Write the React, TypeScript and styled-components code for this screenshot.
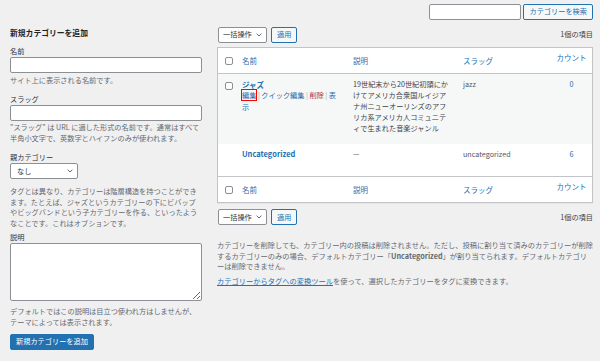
import styled, { createGlobalStyle } from "styled-components";

const GlobalStyle = createGlobalStyle`
  html, body {
    margin: 0;
    padding: 0;
  }
  body {
    background: #f0f0f1;
    color: #3c434a;
    font-family: "Noto Sans CJK JP", "Noto Sans", sans-serif;
    font-size: 7.2px;
    line-height: 10.5px;
  }
`;

const Page = styled.div`
  box-sizing: border-box;
  width: 600px;
  height: 361px;
  padding: 4px 7px 0 10px;
  overflow: hidden;
`;

const SearchRow = styled.div`
  display: flex;
  justify-content: flex-end;
  gap: 2px;
  height: 16px;
`;

const Columns = styled.div`
  display: flex;
  gap: 15px;
  margin-top: 7px;
`;

const LeftCol = styled.div`
  width: 192px;
  flex: none;
`;

const RightCol = styled.div`
  flex: 1;
  min-width: 0;
`;

const Heading = styled.h2`
  margin: 0 0 7px;
  font-size: 7.8px;
  line-height: 12px;
  font-weight: 700;
  color: #1d2327;
`;

const Field = styled.div<{ $mb: number }>`
  margin-bottom: ${(p) => p.$mb}px;
`;

const Label = styled.label`
  display: block;
  margin-bottom: 0.75px;
  color: #2c3338;
`;

const TextInput = styled.input<{ $w?: number }>`
  box-sizing: border-box;
  display: block;
  width: ${(p) => (p.$w ? `${p.$w}px` : "100%")};
  height: 16px;
  margin: 0;
  padding: 0 4px;
  border: 1px solid #8c8f94;
  border-radius: 2px;
  background: #fff;
  font: inherit;
`;

const TextArea = styled.textarea`
  box-sizing: border-box;
  display: block;
  width: 100%;
  height: 58px;
  margin: 0;
  padding: 2px 4px;
  border: 1px solid #8c8f94;
  border-radius: 2px;
  background: #fff;
  font: inherit;
  resize: vertical;
`;

const Help = styled.p<{ $mt: number }>`
  margin: ${(p) => p.$mt}px 0 0;
  color: #646970;
`;

const SelectBox = styled.div<{ $w: number; $pl: number }>`
  box-sizing: border-box;
  display: flex;
  align-items: center;
  justify-content: space-between;
  width: ${(p) => p.$w}px;
  height: 16px;
  padding: 0 4px 0 ${(p) => p.$pl}px;
  border: 1px solid #8c8f94;
  border-radius: 2px;
  background: #fff;
  color: #2c3338;
`;

const Button = styled.button<{ $primary?: boolean }>`
  box-sizing: border-box;
  height: 16px;
  margin: 0;
  padding: 0 5px;
  border: 1px solid #2271b1;
  border-radius: 2px;
  background: ${(p) => (p.$primary ? "#2271b1" : "#f6f7f7")};
  color: ${(p) => (p.$primary ? "#fff" : "#2271b1")};
  font-family: inherit;
  font-size: 7.2px;
  line-height: 1;
  white-space: nowrap;
`;

const SubmitRow = styled.div`
  margin-top: 6.5px;
`;

const TableNav = styled.div<{ $mt: number; $mb: number }>`
  display: flex;
  align-items: center;
  justify-content: space-between;
  height: 15px;
  margin: ${(p) => p.$mt}px 0 ${(p) => p.$mb}px;
`;

const BulkActions = styled.div`
  display: flex;
  align-items: center;
  gap: 4px;
  padding-left: 1px;
`;

const ItemCount = styled.span`
  color: #3c434a;
`;

const Table = styled.table`
  width: 100%;
  table-layout: fixed;
  border-collapse: separate;
  border-spacing: 0;
  background: #fff;
  border: 1px solid #c3c4c7;
  box-shadow: 0 1px 1px rgba(0, 0, 0, 0.04);
`;

const Th = styled.th<{ $w?: number; $center?: boolean; $raise?: boolean; $foot?: boolean; $pl?: number }>`
  ${(p) => (p.$w ? `width: ${p.$w}px;` : "")}
  box-sizing: border-box;
  padding: ${(p) => (p.$raise ? "3.5px 3px 10.5px" : "7px 3px")};
  padding-left: ${(p) => p.$pl ?? 3}px;
  text-align: ${(p) => (p.$center ? "center" : "left")};
  font-weight: 400;
  font-size: 7.5px;
  line-height: 11px;
  color: #2271b1;
  vertical-align: middle;
  ${(p) => (p.$foot ? "border-top: 1px solid #c3c4c7;" : "border-bottom: 1px solid #c3c4c7;")}
`;

const Row = styled.tr<{ $alt?: boolean }>`
  background: ${(p) => (p.$alt ? "#f6f7f7" : "#fff")};
`;

const Td = styled.td<{ $center?: boolean; $pb?: number; $pl?: number; $pr?: number; $pt?: number }>`
  padding: ${(p) => p.$pt ?? 5}px ${(p) => p.$pr ?? 3}px ${(p) => p.$pb ?? 5}px ${(p) => p.$pl ?? 3}px;
  vertical-align: top;
  text-align: ${(p) => (p.$center ? "center" : "left")};
  line-height: 11px;
  color: #50575e;
`;

const DescCell = styled(Td)`
  color: #3c434a;
`;

const Check = styled.input.attrs({ type: "checkbox" })`
  appearance: none;
  display: block;
  box-sizing: border-box;
  width: 8px;
  height: 8px;
  margin: 0;
  border: 1px solid #8c8f94;
  border-radius: 2px;
  background: #fff;
`;

const RowTitle = styled.a`
  display: block;
  font-size: 7.5px;
  line-height: 11.5px;
  font-weight: 700;
  color: #2271b1;
  text-decoration: none;
`;

const RowActions = styled.div<{ $hidden?: boolean }>`
  visibility: ${(p) => (p.$hidden ? "hidden" : "visible")};
  line-height: 11.5px;
  color: #a7aaad;
`;

const Sep = styled.span`
  margin: 0 1.5px;
  color: #a7aaad;
`;

const ActionLink = styled.a<{ $danger?: boolean; $marked?: boolean }>`
  color: ${(p) => (p.$danger ? "#b32d2e" : "#2271b1")};
  text-decoration: none;
  ${(p) => (p.$marked ? "outline: 1.3px solid #ff0000; outline-offset: 0;" : "")}
`;

const CountLink = styled.a`
  color: #2271b1;
  text-decoration: none;
`;

const Notes = styled.div`
  margin-top: 15.75px;
  font-size: 7.25px;
  line-height: 10.5px;
  color: #646970;
`;

const NoteP = styled.p<{ $mt: number }>`
  margin: ${(p) => p.$mt}px 0 0;
`;

const NoteLink = styled.a`
  color: #2271b1;
  text-decoration: underline;
`;

const Strong = styled.strong`
  font-weight: 700;
`;

function Chevron() {
  return (
    <svg width="6" height="4" viewBox="0 0 6 4">
      <path d="M0.6 0.7 L3 3 L5.4 0.7" fill="none" stroke="#50575e" strokeWidth="0.9" />
    </svg>
  );
}

function TableNavBar({ mt, mb }: { mt: number; mb: number }) {
  return (
    <TableNav $mt={mt} $mb={mb}>
      <BulkActions>
        <SelectBox $w={49} $pl={4}>
          一括操作
          <Chevron />
        </SelectBox>
        <Button>適用</Button>
      </BulkActions>
      <ItemCount>1個の項目</ItemCount>
    </TableNav>
  );
}

function HeaderCells({ foot }: { foot?: boolean }) {
  return (
    <tr>
      <Th $w={21} $pl={7} $foot={foot}>
        <Check />
      </Th>
      <Th $w={111} $foot={foot}>名前</Th>
      <Th $w={110} $foot={foot}>説明</Th>
      <Th $w={91} $foot={foot}>スラッグ</Th>
      <Th $w={41} $center $raise $foot={foot}>カウント</Th>
    </tr>
  );
}

export default function App() {
  return (
    <>
      <GlobalStyle />
      <Page>
        <SearchRow>
          <TextInput $w={92} />
          <Button>カテゴリーを検索</Button>
        </SearchRow>
        <Columns>
          <LeftCol>
            <Heading>新規カテゴリーを追加</Heading>
            <Field $mb={8.5}>
              <Label>名前</Label>
              <TextInput />
              <Help $mt={1.25}>サイト上に表示される名前です。</Help>
            </Field>
            <Field $mb={9}>
              <Label>スラッグ</Label>
              <TextInput />
              <Help $mt={1.25}>
                "スラッグ" は URL に適した形式の名前です。通常はすべて半角小文字で、英数字とハイフンのみが使われます。
              </Help>
            </Field>
            <Field $mb={4}>
              <Label>親カテゴリー</Label>
              <SelectBox $w={68} $pl={6}>
                なし
                <Chevron />
              </SelectBox>
              <Help $mt={6.75}>
                タグとは異なり、カテゴリーは階層構造を持つことができます。たとえば、ジャズというカテゴリーの下にビバップやビッグバンドという子カテゴリーを作る、といったようなことです。これはオプションです。
              </Help>
            </Field>
            <Field $mb={0}>
              <Label>説明</Label>
              <TextArea />
              <Help $mt={4.75}>
                デフォルトではこの説明は目立つ使われ方はしませんが、テーマによっては表示されます。
              </Help>
            </Field>
            <SubmitRow>
              <Button $primary>新規カテゴリーを追加</Button>
            </SubmitRow>
          </LeftCol>

          <RightCol>
            <TableNavBar mt={0} mb={5} />
            <Table>
              <thead>
                <HeaderCells />
              </thead>
              <tbody>
                <Row $alt>
                  <Td $pl={7} $pt={7.5}>
                    <Check />
                  </Td>
                  <Td $pr={10} $pt={4.5}>
                    <RowTitle>ジャズ</RowTitle>
                    <RowActions>
                      <ActionLink $marked>編集</ActionLink>
                      <Sep>|</Sep>
                      <ActionLink>クイック編集</ActionLink>
                      <Sep>|</Sep>
                      <ActionLink $danger>削除</ActionLink>
                      <Sep>|</Sep>
                      <ActionLink>表示</ActionLink>
                    </RowActions>
                  </Td>
                  <DescCell $pr={9} $pb={9.5}>
                    19世紀末から20世紀初頭にかけてアメリカ合衆国ルイジアナ州ニューオーリンズのアフリカ系アメリカ人コミュニティで生まれた音楽ジャンル
                  </DescCell>
                  <Td>jazz</Td>
                  <Td $center>
                    <CountLink>0</CountLink>
                  </Td>
                </Row>
                <Row>
                  <Td $pl={7} />
                  <Td $pr={10} $pt={4.5}>
                    <RowTitle>Uncategorized</RowTitle>
                    <RowActions $hidden>
                      <ActionLink>編集</ActionLink>
                      <Sep>|</Sep>
                      <ActionLink>クイック編集</ActionLink>
                      <Sep>|</Sep>
                      <ActionLink>表示</ActionLink>
                    </RowActions>
                  </Td>
                  <DescCell>—</DescCell>
                  <Td>uncategorized</Td>
                  <Td $center>
                    <CountLink>6</CountLink>
                  </Td>
                </Row>
              </tbody>
              <tfoot>
                <HeaderCells foot />
              </tfoot>
            </Table>
            <TableNavBar mt={6.7} mb={0} />
            <Notes>
              <NoteP $mt={0}>
                カテゴリーを削除しても、カテゴリー内の投稿は削除されません。ただし、投稿に割り当て済みのカテゴリーが削除するカテゴリーのみの場合、デフォルトカテゴリー「<Strong>Uncategorized</Strong>」が割り当てられます。デフォルトカテゴリーは削除できません。
              </NoteP>
              <NoteP $mt={4.2}>
                <NoteLink>カテゴリーからタグへの変換ツール</NoteLink>を使って、選択したカテゴリーをタグに変換できます。
              </NoteP>
            </Notes>
          </RightCol>
        </Columns>
      </Page>
    </>
  );
}
